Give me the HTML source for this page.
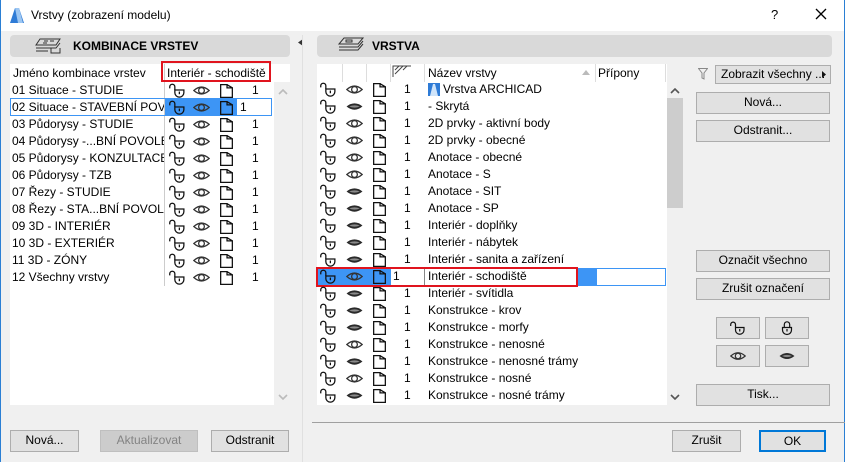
<!DOCTYPE html>
<html><head><meta charset="utf-8"><style>
*{margin:0;padding:0;box-sizing:border-box}
body{width:845px;height:462px;background:#f0f0f0;font-family:"Liberation Sans",sans-serif;font-size:12px;color:#000;position:relative;overflow:hidden}
.a{position:absolute}
.btn{position:absolute;background:#e1e1e1;border:1px solid #adadad;text-align:center;line-height:19px;font-size:12px}
.hdr{position:absolute;background:#d9d9d9;border-radius:4px;height:22px;font-weight:bold;font-size:12px;line-height:22px}
.row{position:absolute;height:17px;line-height:17px;white-space:nowrap}
.row svg{position:absolute;top:0px;width:17px;height:17px}
.row .n{position:absolute}
.row .t{position:absolute}
.l .t{width:152px;overflow:hidden}
</style></head><body>
<svg width="0" height="0" style="position:absolute">
<defs>
<symbol id="lk" viewBox="0 0 16 16"><path d="M5.5 7.5H14V10a4.25 4.25 0 0 1-8.5 0Z" fill="none" stroke="#111" stroke-width="1.2"/><path d="M5.5 7.5V4.5a2.4 2.4 0 0 0-4.8 0V6" fill="none" stroke="#111" stroke-width="1.2"/><path d="M9.75 9v2.5" stroke="#111" stroke-width="1.2"/></symbol>
<symbol id="lc" viewBox="0 0 16 16"><path d="M3.5 7.5H12.5V10a4.5 4.5 0 0 1-9 0Z" fill="none" stroke="#111" stroke-width="1.2"/><path d="M5.3 7.5V4.5a2.7 2.7 0 0 1 5.4 0V7.5" fill="none" stroke="#111" stroke-width="1.2"/><path d="M8 9v2.5" stroke="#111" stroke-width="1.2"/></symbol>
<symbol id="eo" viewBox="0 0 16 16"><path d="M0.8 8Q8 1.5 15.2 8Q8 14.5 0.8 8Z" fill="none" stroke="#333" stroke-width="1.2"/><circle cx="8" cy="8" r="2.7" fill="none" stroke="#333" stroke-width="1.2"/></symbol>
<symbol id="ec" viewBox="0 0 16 16"><path d="M0.5 8Q8 2 15.5 8Q8 14 0.5 8Z" fill="#2a2a2a"/><path d="M3 8Q8 5.8 13 8Q8 10.2 3 8Z" fill="#8a8a8a"/></symbol>
<symbol id="fd" viewBox="0 0 16 16"><path d="M2.5 2.5H8.5V5.5H13.5V14.5H2.5Z M8.5 2.5L13.5 5.5" fill="none" stroke="#111" stroke-width="1.2"/></symbol>
<symbol id="up" viewBox="0 0 10 6"><path d="M1 5L5 1L9 5" fill="none" stroke-width="1.6"/></symbol>
<symbol id="dn" viewBox="0 0 10 6"><path d="M1 1L5 5L9 1" fill="none" stroke-width="1.6"/></symbol>
</defs></svg>

<!-- title bar -->
<div class="a" style="left:0;top:0;width:845px;height:31px;background:#fff"></div>
<svg class="a" style="left:10px;top:8px" width="14" height="15" viewBox="0 0 14 15"><path d="M0 15L5 0H9L14 15Z" fill="#2e7bd6"/><path d="M5 0L9 0L13 15H8Z" fill="#9cc6f2"/></svg>
<div class="a" style="left:31px;top:8px;font-size:12px">Vrstvy (zobrazení modelu)</div>
<div class="a" style="left:771px;top:7px;font-size:13px">?</div>
<svg class="a" style="left:815px;top:8px" width="12" height="12" viewBox="0 0 12 12"><path d="M1 1L11 11M11 1L1 11" stroke="#000" stroke-width="1.3"/></svg>
<div class="a" style="left:0;top:0;width:1px;height:462px;background:#2a7fd4"></div>
<div class="a" style="left:844px;top:0;width:1px;height:462px;background:#2a7fd4"></div>

<!-- left panel -->
<div class="hdr" style="left:10px;top:35px;width:280px;padding-left:63px">KOMBINACE VRSTEV</div>
<svg class="a" style="left:34px;top:38px" width="30" height="16" viewBox="0 0 30 16"><g fill="none" stroke="#333" stroke-width="1"><path d="M6 1H26L22 7H2Z"/><path d="M2 10H22L26 5"/><path d="M2 13H14"/><path d="M17 10V15H26V10"/><path d="M10 3H14M9 5H13M16 3H20"/></g></svg>
<div class="a" style="left:10px;top:64px;width:264px;height:341px;background:#fff"></div>
<div class="a" style="left:274px;top:82px;width:16px;height:323px;background:#f0f0f0"></div>
<svg class="a" style="left:278px;top:89px;stroke:#bbb" width="10" height="6"><use href="#up"/></svg>
<svg class="a" style="left:278px;top:394px;stroke:#bbb" width="10" height="6"><use href="#dn"/></svg>
<div class="a" style="left:10px;top:64px;width:280px;height:18px;background:#fff"></div>
<div class="a" style="left:13px;top:66px">Jméno kombinace vrstev</div>
<div class="a" style="left:164px;top:64px;width:1px;height:222px;background:#ccc"></div>
<div class="a" style="left:167px;top:66px">Interiér - schodiště</div>
<div class="a" style="left:161px;top:61px;width:110px;height:21px;border:2px solid #e0141e"></div>

<div class="a" style="left:165px;top:98px;width:72px;height:17px;background:#3d95f5"></div>
<div class="a" style="left:10px;top:98px;width:262px;height:18px;border:1px solid #3d95f5"></div>

<div class="row l" style="left:0;top:82px;width:290px"><span class="t" style="left:12px">01 Situace - STUDIE</span><svg style="left:169px"><use href="#lk"/></svg><svg style="left:193px"><use href="#eo"/></svg><svg style="left:218px"><use href="#fd"/></svg><span class="n" style="left:252px">1</span></div>
<div class="row l" style="left:0;top:99px;width:290px"><span class="t" style="left:12px">02 Situace - STAVEBNÍ POVOLENÍ</span><svg style="left:169px"><use href="#lk"/></svg><svg style="left:193px"><use href="#eo"/></svg><svg style="left:218px"><use href="#fd"/></svg><span class="n" style="left:240px">1</span></div>
<div class="row l" style="left:0;top:116px;width:290px"><span class="t" style="left:12px">03 Půdorysy - STUDIE</span><svg style="left:169px"><use href="#lk"/></svg><svg style="left:193px"><use href="#eo"/></svg><svg style="left:218px"><use href="#fd"/></svg><span class="n" style="left:252px">1</span></div>
<div class="row l" style="left:0;top:133px;width:290px"><span class="t" style="left:12px">04 Půdorysy -...BNÍ POVOLENÍ</span><svg style="left:169px"><use href="#lk"/></svg><svg style="left:193px"><use href="#eo"/></svg><svg style="left:218px"><use href="#fd"/></svg><span class="n" style="left:252px">1</span></div>
<div class="row l" style="left:0;top:150px;width:290px"><span class="t" style="left:12px">05 Půdorysy - KONZULTACE</span><svg style="left:169px"><use href="#lk"/></svg><svg style="left:193px"><use href="#eo"/></svg><svg style="left:218px"><use href="#fd"/></svg><span class="n" style="left:252px">1</span></div>
<div class="row l" style="left:0;top:167px;width:290px"><span class="t" style="left:12px">06 Půdorysy - TZB</span><svg style="left:169px"><use href="#lk"/></svg><svg style="left:193px"><use href="#eo"/></svg><svg style="left:218px"><use href="#fd"/></svg><span class="n" style="left:252px">1</span></div>
<div class="row l" style="left:0;top:184px;width:290px"><span class="t" style="left:12px">07 Řezy - STUDIE</span><svg style="left:169px"><use href="#lk"/></svg><svg style="left:193px"><use href="#eo"/></svg><svg style="left:218px"><use href="#fd"/></svg><span class="n" style="left:252px">1</span></div>
<div class="row l" style="left:0;top:201px;width:290px"><span class="t" style="left:12px">08 Řezy - STA...BNÍ POVOLENÍ</span><svg style="left:169px"><use href="#lk"/></svg><svg style="left:193px"><use href="#eo"/></svg><svg style="left:218px"><use href="#fd"/></svg><span class="n" style="left:252px">1</span></div>
<div class="row l" style="left:0;top:218px;width:290px"><span class="t" style="left:12px">09 3D - INTERIÉR</span><svg style="left:169px"><use href="#lk"/></svg><svg style="left:193px"><use href="#eo"/></svg><svg style="left:218px"><use href="#fd"/></svg><span class="n" style="left:252px">1</span></div>
<div class="row l" style="left:0;top:235px;width:290px"><span class="t" style="left:12px">10 3D - EXTERIÉR</span><svg style="left:169px"><use href="#lk"/></svg><svg style="left:193px"><use href="#eo"/></svg><svg style="left:218px"><use href="#fd"/></svg><span class="n" style="left:252px">1</span></div>
<div class="row l" style="left:0;top:252px;width:290px"><span class="t" style="left:12px">11 3D - ZÓNY</span><svg style="left:169px"><use href="#lk"/></svg><svg style="left:193px"><use href="#eo"/></svg><svg style="left:218px"><use href="#fd"/></svg><span class="n" style="left:252px">1</span></div>
<div class="row l" style="left:0;top:269px;width:290px"><span class="t" style="left:12px">12 Všechny vrstvy</span><svg style="left:169px"><use href="#lk"/></svg><svg style="left:193px"><use href="#eo"/></svg><svg style="left:218px"><use href="#fd"/></svg><span class="n" style="left:252px">1</span></div>

<div class="btn" style="left:10px;top:430px;width:69px;height:22px">Nová...</div>
<div class="btn" style="left:100px;top:430px;width:98px;height:22px;background:#ccc;border-color:#bfbfbf;color:#838383">Aktualizovat</div>
<div class="btn" style="left:211px;top:430px;width:78px;height:22px">Odstranit</div>

<!-- divider -->
<svg class="a" style="left:298px;top:39px" width="5" height="7" viewBox="0 0 5 7"><path d="M5 0V7L0 3.5Z" fill="#333"/></svg>
<div class="a" style="left:302px;top:35px;width:1px;height:427px;background:#e0e0e0"></div>
<div class="a" style="left:312px;top:422px;width:533px;height:1px;background:#a0a0a0"></div>

<!-- right panel -->
<div class="hdr" style="left:317px;top:35px;width:515px;padding-left:55px">VRSTVA</div>
<svg class="a" style="left:338px;top:37px" width="26" height="17" viewBox="0 0 26 17"><g fill="none" stroke="#333" stroke-width="1"><path d="M6 1H25L20 7H1Z"/><path d="M1 10H20L25 4"/><path d="M1 13H20L25 7"/><path d="M8 3H14V5H8Z"/></g></svg>
<div class="a" style="left:317px;top:64px;width:350px;height:341px;background:#fff"></div>
<div class="a" style="left:667px;top:82px;width:16px;height:323px;background:#f0f0f0"></div>
<div class="a" style="left:667px;top:98px;width:16px;height:110px;background:#cdcdcd"></div>
<svg class="a" style="left:670px;top:88px;stroke:#555" width="10" height="6"><use href="#up"/></svg>
<svg class="a" style="left:670px;top:394px;stroke:#555" width="10" height="6"><use href="#dn"/></svg>
<div class="a" style="left:317px;top:64px;width:350px;height:18px;background:#fff"></div>
<div class="a" style="left:342px;top:64px;width:1px;height:18px;background:#ddd"></div>
<div class="a" style="left:366px;top:64px;width:1px;height:18px;background:#ddd"></div>
<div class="a" style="left:390px;top:64px;width:1px;height:18px;background:#ddd"></div>
<div class="a" style="left:424px;top:64px;width:1px;height:18px;background:#ddd"></div>
<div class="a" style="left:595px;top:64px;width:1px;height:18px;background:#ddd"></div>
<div class="a" style="left:665px;top:64px;width:1px;height:18px;background:#ddd"></div>
<svg class="a" style="left:392px;top:65px" width="20" height="12" viewBox="0 0 20 12"><g fill="none" stroke="#444" stroke-width="1"><path d="M1 12V1H19"/><path d="M3 5L7 1M3 9L11 1M7 5L11 1M11 5L15 1"/></g></svg>
<div class="a" style="left:428px;top:66px">Název vrstvy</div>
<svg class="a" style="left:582px;top:70px" width="8" height="5" viewBox="0 0 8 5"><path d="M0 5L4 0L8 5Z" fill="#bbb"/></svg>
<div class="a" style="left:598px;top:66px">Přípony</div>

<!-- selected row -->
<div class="a" style="left:317px;top:268px;width:74px;height:18px;background:#3d95f5"></div>
<div class="a" style="left:577px;top:268px;width:20px;height:18px;background:#3d95f5"></div>
<div class="a" style="left:596px;top:268px;width:70px;height:18px;border:1px solid #3d95f5"></div>
<div class="a" style="left:316px;top:267px;width:262px;height:20px;border:2px solid #e0141e"></div>
<div class="a" style="left:424px;top:269px;width:1px;height:16px;background:#888"></div>

<div class="row" style="left:0;top:81px"><svg style="left:320px"><use href="#lk"/></svg><svg style="left:346px"><use href="#eo"/></svg><svg style="left:371px"><use href="#fd"/></svg><span class="n" style="left:404px">1</span><svg class="a" style="left:428px;top:2px;width:12px;height:13px" viewBox="0 0 12 13"><rect width="12" height="13" fill="#2e7bd6"/><path d="M2 13L5 1H7L10 13Z" fill="#cfe4fa"/></svg><span class="t" style="left:443px">Vrstva ARCHICAD</span></div>
<div class="row" style="left:0;top:98px"><svg style="left:320px"><use href="#lk"/></svg><svg style="left:346px"><use href="#ec"/></svg><svg style="left:371px"><use href="#fd"/></svg><span class="n" style="left:404px">1</span><span class="t" style="left:428px">- Skrytá</span></div>
<div class="row" style="left:0;top:115px"><svg style="left:320px"><use href="#lk"/></svg><svg style="left:346px"><use href="#eo"/></svg><svg style="left:371px"><use href="#fd"/></svg><span class="n" style="left:404px">1</span><span class="t" style="left:428px">2D prvky - aktivní body</span></div>
<div class="row" style="left:0;top:132px"><svg style="left:320px"><use href="#lk"/></svg><svg style="left:346px"><use href="#eo"/></svg><svg style="left:371px"><use href="#fd"/></svg><span class="n" style="left:404px">1</span><span class="t" style="left:428px">2D prvky - obecné</span></div>
<div class="row" style="left:0;top:149px"><svg style="left:320px"><use href="#lk"/></svg><svg style="left:346px"><use href="#eo"/></svg><svg style="left:371px"><use href="#fd"/></svg><span class="n" style="left:404px">1</span><span class="t" style="left:428px">Anotace - obecné</span></div>
<div class="row" style="left:0;top:166px"><svg style="left:320px"><use href="#lk"/></svg><svg style="left:346px"><use href="#eo"/></svg><svg style="left:371px"><use href="#fd"/></svg><span class="n" style="left:404px">1</span><span class="t" style="left:428px">Anotace - S</span></div>
<div class="row" style="left:0;top:183px"><svg style="left:320px"><use href="#lk"/></svg><svg style="left:346px"><use href="#ec"/></svg><svg style="left:371px"><use href="#fd"/></svg><span class="n" style="left:404px">1</span><span class="t" style="left:428px">Anotace - SIT</span></div>
<div class="row" style="left:0;top:200px"><svg style="left:320px"><use href="#lk"/></svg><svg style="left:346px"><use href="#ec"/></svg><svg style="left:371px"><use href="#fd"/></svg><span class="n" style="left:404px">1</span><span class="t" style="left:428px">Anotace - SP</span></div>
<div class="row" style="left:0;top:217px"><svg style="left:320px"><use href="#lk"/></svg><svg style="left:346px"><use href="#ec"/></svg><svg style="left:371px"><use href="#fd"/></svg><span class="n" style="left:404px">1</span><span class="t" style="left:428px">Interiér - doplňky</span></div>
<div class="row" style="left:0;top:234px"><svg style="left:320px"><use href="#lk"/></svg><svg style="left:346px"><use href="#ec"/></svg><svg style="left:371px"><use href="#fd"/></svg><span class="n" style="left:404px">1</span><span class="t" style="left:428px">Interiér - nábytek</span></div>
<div class="row" style="left:0;top:251px"><svg style="left:320px"><use href="#lk"/></svg><svg style="left:346px"><use href="#ec"/></svg><svg style="left:371px"><use href="#fd"/></svg><span class="n" style="left:404px">1</span><span class="t" style="left:428px">Interiér - sanita a zařízení</span></div>
<div class="row" style="left:0;top:268px"><svg style="left:320px"><use href="#lk"/></svg><svg style="left:346px"><use href="#eo"/></svg><svg style="left:371px"><use href="#fd"/></svg><span class="n" style="left:393px">1</span><span class="t" style="left:428px">Interiér - schodiště</span></div>
<div class="row" style="left:0;top:285px"><svg style="left:320px"><use href="#lk"/></svg><svg style="left:346px"><use href="#ec"/></svg><svg style="left:371px"><use href="#fd"/></svg><span class="n" style="left:404px">1</span><span class="t" style="left:428px">Interiér - svítidla</span></div>
<div class="row" style="left:0;top:302px"><svg style="left:320px"><use href="#lk"/></svg><svg style="left:346px"><use href="#ec"/></svg><svg style="left:371px"><use href="#fd"/></svg><span class="n" style="left:404px">1</span><span class="t" style="left:428px">Konstrukce - krov</span></div>
<div class="row" style="left:0;top:319px"><svg style="left:320px"><use href="#lk"/></svg><svg style="left:346px"><use href="#ec"/></svg><svg style="left:371px"><use href="#fd"/></svg><span class="n" style="left:404px">1</span><span class="t" style="left:428px">Konstrukce - morfy</span></div>
<div class="row" style="left:0;top:336px"><svg style="left:320px"><use href="#lk"/></svg><svg style="left:346px"><use href="#eo"/></svg><svg style="left:371px"><use href="#fd"/></svg><span class="n" style="left:404px">1</span><span class="t" style="left:428px">Konstrukce - nenosné</span></div>
<div class="row" style="left:0;top:353px"><svg style="left:320px"><use href="#lk"/></svg><svg style="left:346px"><use href="#ec"/></svg><svg style="left:371px"><use href="#fd"/></svg><span class="n" style="left:404px">1</span><span class="t" style="left:428px">Konstrukce - nenosné trámy</span></div>
<div class="row" style="left:0;top:370px"><svg style="left:320px"><use href="#lk"/></svg><svg style="left:346px"><use href="#eo"/></svg><svg style="left:371px"><use href="#fd"/></svg><span class="n" style="left:404px">1</span><span class="t" style="left:428px">Konstrukce - nosné</span></div>
<div class="row" style="left:0;top:387px"><svg style="left:320px"><use href="#lk"/></svg><svg style="left:346px"><use href="#ec"/></svg><svg style="left:371px"><use href="#fd"/></svg><span class="n" style="left:404px">1</span><span class="t" style="left:428px">Konstrukce - nosné trámy</span></div>

<!-- right buttons -->
<svg class="a" style="left:698px;top:68px" width="10" height="12" viewBox="0 0 10 12"><path d="M0.5 0.5H9.5L6 5V11L4 10V5Z" fill="none" stroke="#888"/></svg>
<div class="btn" style="left:715px;top:65px;width:116px;height:19px;line-height:17px;text-align:left;padding-left:5px;white-space:nowrap;overflow:hidden">Zobrazit všechny ...<svg style="position:absolute;right:4px;top:5px" width="4" height="7" viewBox="0 0 4 7"><path d="M0 0L4 3.5L0 7Z" fill="#111"/></svg></div>
<div class="btn" style="left:696px;top:92px;width:134px;height:22px">Nová...</div>
<div class="btn" style="left:696px;top:120px;width:134px;height:22px">Odstranit...</div>
<div class="btn" style="left:696px;top:250px;width:134px;height:22px">Označit všechno</div>
<div class="btn" style="left:696px;top:278px;width:134px;height:22px">Zrušit označení</div>
<div class="btn" style="left:716px;top:317px;width:44px;height:22px"><svg style="margin-top:2px" width="16" height="16"><use href="#lk"/></svg></div>
<div class="btn" style="left:765px;top:317px;width:44px;height:22px"><svg style="margin-top:2px" width="16" height="16"><use href="#lc"/></svg></div>
<div class="btn" style="left:716px;top:345px;width:44px;height:22px"><svg style="margin-top:2px" width="16" height="16"><use href="#eo"/></svg></div>
<div class="btn" style="left:765px;top:345px;width:44px;height:22px"><svg style="margin-top:2px" width="16" height="16"><use href="#ec"/></svg></div>
<div class="btn" style="left:696px;top:384px;width:134px;height:22px">Tisk...</div>
<div class="btn" style="left:672px;top:430px;width:69px;height:22px">Zrušit</div>
<div class="btn" style="left:759px;top:430px;width:67px;height:22px;border:2px solid #0078d7;line-height:18px">OK</div>
</body></html>
